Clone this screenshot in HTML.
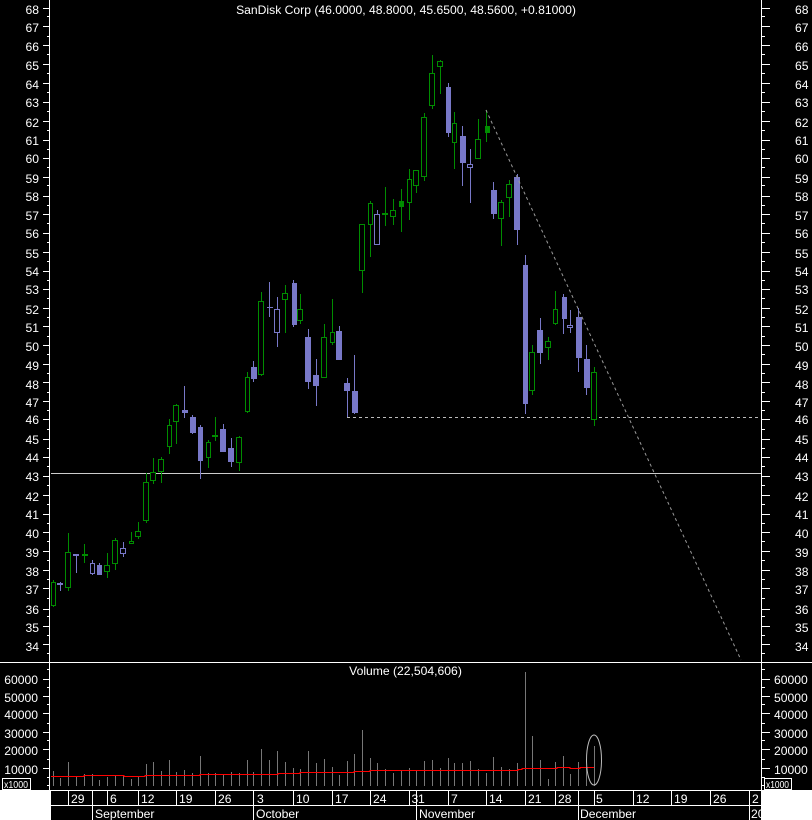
<!DOCTYPE html>
<html><head><meta charset="utf-8"><style>
html,body{margin:0;padding:0;background:#000;width:812px;height:820px;overflow:hidden}
svg{display:block}
text{font-family:"Liberation Sans",Arial,sans-serif;font-size:12.15px;fill:#fff}
text.s{font-size:10px}
</style></head><body>
<svg width="812" height="820" viewBox="0 0 812 820" xmlns="http://www.w3.org/2000/svg">
<rect width="812" height="820" fill="#000"/>
<g shape-rendering="crispEdges" fill="none">
<!-- reference lines -->
<path d="M51 473.5H761" stroke="#ccc"/>
<path d="M347 417.5H761" stroke="#bbb" stroke-dasharray="3 3"/>
<!-- green wicks -->
<path stroke="#008c00" d="M53.5 580V607M68.5 533V591M84.5 544V563M107.5 553V578M115.5 538V570M131.5 532V543M138.5 522V539M146.5 473V523M153.5 458V484M161.5 457V483M169.5 419V454M176.5 404V444M208.5 440V468M215.5 417V441M239.5 436V471M247.5 372V413M261.5 292V376M285.5 285V333M300.5 294V324M324.5 324V378M332.5 299V345M362.5 224V293M370.5 201V257M385.5 187V226M393.5 199V225M401.5 189V232M409.5 169V220M416.5 170V193M424.5 113V181M432.5 55V109M440.5 60V94M454.5 112V169M478.5 119V159M486.5 110V142M501.5 200V246M509.5 180V217M532.5 345V395M548.5 337V360M555.5 291V325M594.5 367V426"/>
<!-- blue wicks -->
<path stroke="#7878c8" d="M60.5 582V591M76.5 554V573M92.5 560V575M99.5 563V575M123.5 542V557M184.5 386V418M192.5 415V434M200.5 425V479M223.5 424V452M231.5 438V467M253.5 361V382M269.5 282V317M267 307.5H273M277.5 297V347M293.5 280V327M308.5 329V389M316.5 359V406M339.5 326V331M347.5 378V417M354.5 355V414M377.5 210V245M448.5 83V137M462.5 126V186M470.5 149V203M493.5 182V219M517.5 174V245M525.5 255V414M540.5 318V364M563.5 294V334M570.5 310V333M578.5 308V372M586.5 345V395"/>
<!-- green outlined bodies -->
<g fill="#000" stroke="#008c00">
<rect x="51.5" y="582.5" width="4" height="23"/><rect x="65.5" y="552.5" width="5" height="35"/><rect x="104.5" y="565.5" width="5" height="6"/><rect x="112.5" y="540.5" width="5" height="23"/><rect x="129.5" y="541.5" width="4" height="2"/><rect x="135.5" y="531.5" width="5" height="5"/><rect x="143.5" y="482.5" width="5" height="38"/><rect x="150.5" y="472.5" width="5" height="8"/><rect x="158.5" y="459.5" width="5" height="12"/><rect x="167.5" y="425.5" width="4" height="21"/><rect x="173.5" y="405.5" width="5" height="16"/><rect x="206.5" y="442.5" width="4" height="15"/><rect x="236.5" y="437.5" width="5" height="25"/><rect x="245.5" y="377.5" width="4" height="34"/><rect x="258.5" y="301.5" width="5" height="73"/><rect x="282.5" y="293.5" width="5" height="6"/><rect x="297.5" y="309.5" width="5" height="11"/><rect x="321.5" y="337.5" width="5" height="40"/><rect x="330.5" y="332.5" width="4" height="10"/><rect x="359.5" y="224.5" width="5" height="46"/><rect x="368.5" y="203.5" width="4" height="21"/><rect x="390.5" y="210.5" width="5" height="6"/><rect x="407.5" y="179.5" width="4" height="23"/><rect x="413.5" y="170.5" width="5" height="15"/><rect x="421.5" y="117.5" width="5" height="59"/><rect x="429.5" y="73.5" width="5" height="32"/><rect x="437.5" y="61.5" width="5" height="5"/><rect x="452.5" y="123.5" width="4" height="19"/><rect x="475.5" y="139.5" width="5" height="19"/><rect x="498.5" y="202.5" width="5" height="16"/><rect x="506.5" y="184.5" width="5" height="13"/><rect x="529.5" y="352.5" width="5" height="38"/><rect x="545.5" y="341.5" width="5" height="6"/><rect x="553.5" y="309.5" width="4" height="14"/><rect x="591.5" y="372.5" width="5" height="47"/>
</g>
<!-- green filled bodies -->
<path fill="#008c00" d="M82 554h6v2h-6zM212 435h6v2h-6zM382 213h6v2h-6zM399 201h5v6h-5zM485 126h5v7h-5z"/>
<!-- blue outlined bodies -->
<g fill="#000" stroke="#7878c8">
<rect x="90.5" y="563.5" width="4" height="10"/><rect x="120.5" y="548.5" width="5" height="5"/><rect x="274.5" y="309.5" width="5" height="23"/><rect x="374.5" y="214.5" width="5" height="30"/><rect x="467.5" y="164.5" width="5" height="3"/><rect x="567.5" y="325.5" width="5" height="2"/>
</g>
<!-- blue filled bodies -->
<path fill="#7878c8" d="M57 583h6v2h-6zM73 554h6v2h-6zM97 565h5v10h-5zM182 410h6v3h-6zM190 417h6v16h-6zM198 427h5v34h-5zM220 429h6v23h-6zM228 448h6v14h-6zM251 367h6v12h-6zM292 283h5v42h-5zM305 337h6v45h-6zM313 375h6v11h-6zM336 331h6v29h-6zM344 383h6v8h-6zM352 391h6v22h-6zM446 87h5v46h-5zM460 136h6v27h-6zM491 190h6v24h-6zM514 177h6v53h-6zM523 265h5v139h-5zM537 330h6v23h-6zM562 297h5v22h-5zM576 317h6v41h-6zM584 359h6v29h-6z"/>
<!-- volume bars -->
<path stroke="#777" d="M53.5 771V786M60.5 778V786M68.5 762V786M76.5 777V786M84.5 774V786M92.5 774V786M99.5 780V786M107.5 777V786M115.5 775V786M123.5 776V786M131.5 779V786M138.5 777V786M146.5 764V786M153.5 762V786M161.5 771V786M169.5 760V786M176.5 772V786M184.5 770V786M192.5 773V786M200.5 756V786M208.5 773V786M215.5 773V786M223.5 774V786M231.5 772V786M239.5 773V786M247.5 760V786M253.5 772V786M261.5 749V786M269.5 760V786M277.5 751V786M285.5 762V786M293.5 768V786M300.5 769V786M308.5 751V786M316.5 763V786M324.5 759V786M332.5 767V786M339.5 775V786M347.5 761V786M354.5 754V786M362.5 730V786M370.5 758V786M377.5 763V786M385.5 769V786M393.5 773V786M401.5 771V786M409.5 768V786M416.5 771V786M424.5 761V786M432.5 760V786M440.5 768V786M448.5 758V786M454.5 763V786M462.5 763V786M470.5 761V786M478.5 769V786M486.5 773V786M493.5 757V786M501.5 767V786M509.5 769V786M517.5 763V786M525.5 672V786M532.5 736V786M540.5 760V786M548.5 779V786M555.5 762V786M563.5 756V786M570.5 774V786M578.5 762V786M586.5 767V786M594.5 746V786"/>
<path stroke="#f00" d="M51 776.5H84V775.5H124V776.5H145V775.5H200V774.5H278V773.5H300V772.5H354V771.5H370V770.5H518V769.5H522V768.5H557V767.5H570V768.5H580V767.5H594"/>
<!-- axes -->
<path stroke="#fff" d="M49.5 0V790M761.5 0V790M0 662.5H812M51 790.5H761M51 805.5H761"/>
<!-- ticks left price -->
<path stroke="#fff" d="M43 8.5h6M47 16.5h2M43 26.5h6M47 36.5h2M43 45.5h6M47 54.5h2M43 64.5h6M47 73.5h2M43 83.5h6M47 92.5h2M43 102.5h6M47 111.5h2M43 121.5h6M47 130.5h2M43 140.5h6M47 149.5h2M43 158.5h6M47 167.5h2M43 177.5h6M47 185.5h2M43 196.5h6M47 205.5h2M43 214.5h6M47 223.5h2M43 233.5h6M47 242.5h2M43 252.5h6M47 261.5h2M43 271.5h6M47 280.5h2M43 289.5h6M47 298.5h2M43 308.5h6M47 317.5h2M43 326.5h6M47 336.5h2M43 345.5h6M47 354.5h2M43 364.5h6M47 373.5h2M43 382.5h6M47 392.5h2M43 401.5h6M47 410.5h2M43 419.5h6M47 429.5h2M43 439.5h6M47 448.5h2M43 457.5h6M47 466.5h2M43 476.5h6M47 485.5h2M43 495.5h6M47 504.5h2M43 514.5h6M47 523.5h2M43 532.5h6M47 541.5h2M43 551.5h6M47 560.5h2M43 570.5h6M47 579.5h2M43 588.5h6M47 598.5h2M43 609.5h6M47 616.5h2M43 626.5h6M47 635.5h2M43 644.5h6M47 653.5h2"/>
<!-- ticks right price -->
<path stroke="#fff" d="M762 8.5h8M762 16.5h3M762 26.5h8M762 36.5h3M762 45.5h8M762 54.5h3M762 64.5h8M762 73.5h3M762 83.5h8M762 92.5h3M762 102.5h8M762 111.5h3M762 121.5h8M762 130.5h3M762 140.5h8M762 149.5h3M762 158.5h8M762 167.5h3M762 177.5h8M762 185.5h3M762 196.5h8M762 205.5h3M762 214.5h8M762 223.5h3M762 233.5h8M762 242.5h3M762 252.5h8M762 261.5h3M762 271.5h8M762 280.5h3M762 289.5h8M762 298.5h3M762 308.5h8M762 317.5h3M762 326.5h8M762 336.5h3M762 345.5h8M762 354.5h3M762 364.5h8M762 373.5h3M762 382.5h8M762 392.5h3M762 401.5h8M762 410.5h3M762 419.5h8M762 429.5h3M762 439.5h8M762 448.5h3M762 457.5h8M762 466.5h3M762 476.5h8M762 485.5h3M762 495.5h8M762 504.5h3M762 514.5h8M762 523.5h3M762 532.5h8M762 541.5h3M762 551.5h8M762 560.5h3M762 570.5h8M762 579.5h3M762 588.5h8M762 598.5h3M762 609.5h8M762 616.5h3M762 626.5h8M762 635.5h3M762 644.5h8M762 653.5h3"/>
<!-- ticks volume -->
<path stroke="#fff" d="M47 669.5h2M43 679.5h6M47 687.5h2M43 696.5h6M47 704.5h2M43 713.5h6M47 723.5h2M43 732.5h6M47 740.5h2M43 749.5h6M47 759.5h2M43 768.5h6M47 777.5h2M47 785.5h2M762 669.5h3M762 679.5h8M762 687.5h3M762 696.5h8M762 704.5h3M762 713.5h8M762 723.5h3M762 732.5h8M762 740.5h3M762 749.5h8M762 759.5h3M762 768.5h8M762 777.5h3M762 785.5h3"/>
<!-- date separators -->
<path stroke="#fff" d="M68.5 790V805M92.5 790V820M107.5 790V805M138.5 790V805M176.5 790V805M215.5 790V805M253.5 790V820M293.5 790V805M332.5 790V805M370.5 790V805M409.5 790V805M416.5 790V820M448.5 790V805M486.5 790V805M525.5 790V805M555.5 790V805M578.5 790V820M594.5 790V805M633.5 790V805M671.5 790V805M710.5 790V805M749.5 790V820"/>
<!-- white corners -->
<rect x="0" y="790" width="51" height="30" fill="#fff"/>
<rect x="761" y="790" width="51" height="30" fill="#fff"/>
<rect x="2.5" y="778.5" width="28" height="11" fill="#000" stroke="#fff"/>
<rect x="764.5" y="778.5" width="27" height="11" fill="#000" stroke="#fff"/>
</g>
<!-- trend line and ellipse -->
<path d="M486 110L741 660" stroke="#999" stroke-width="1" stroke-dasharray="3 3" fill="none"/>
<ellipse cx="594" cy="760" rx="7.5" ry="25" fill="none" stroke="#bbb" stroke-width="1"/>
<!-- title -->
<text x="406" y="14" text-anchor="middle">SanDisk Corp (46.0000, 48.8000, 45.6500, 48.5600, +0.81000)</text>
<text x="405.5" y="675" text-anchor="middle">Volume (22,504,606)</text>
<!-- left labels -->
<g text-anchor="end">
<text x="39" y="14">68</text><text x="39" y="32">67</text><text x="39" y="51">66</text><text x="39" y="70">65</text><text x="39" y="89">64</text><text x="39" y="107">63</text><text x="39" y="127">62</text><text x="39" y="145">61</text><text x="39" y="163">60</text><text x="39" y="183">59</text><text x="39" y="201">58</text><text x="39" y="220">57</text><text x="39" y="238">56</text><text x="39" y="258">55</text><text x="39" y="276">54</text><text x="39" y="294">53</text><text x="39" y="314">52</text><text x="39" y="332">51</text><text x="39" y="351">50</text><text x="39" y="370">49</text><text x="39" y="389">48</text><text x="39" y="407">47</text><text x="39" y="424">46</text><text x="39" y="444">45</text><text x="39" y="462">44</text><text x="39" y="481">43</text><text x="39" y="501">42</text><text x="39" y="519">41</text><text x="39" y="538">40</text><text x="39" y="557">39</text><text x="39" y="576">38</text><text x="39" y="594">37</text><text x="39" y="614">36</text><text x="39" y="632">35</text><text x="39" y="651">34</text>
<text x="38" y="684">60000</text><text x="38" y="702">50000</text><text x="38" y="719">40000</text><text x="38" y="738">30000</text><text x="38" y="755">20000</text><text x="38" y="774">10000</text>
</g>
<!-- right labels -->
<g text-anchor="start">
<text x="795" y="14">68</text><text x="795" y="32">67</text><text x="795" y="51">66</text><text x="795" y="70">65</text><text x="795" y="89">64</text><text x="795" y="107">63</text><text x="795" y="127">62</text><text x="795" y="145">61</text><text x="795" y="163">60</text><text x="795" y="183">59</text><text x="795" y="201">58</text><text x="795" y="220">57</text><text x="795" y="238">56</text><text x="795" y="258">55</text><text x="795" y="276">54</text><text x="795" y="294">53</text><text x="795" y="314">52</text><text x="795" y="332">51</text><text x="795" y="351">50</text><text x="795" y="370">49</text><text x="795" y="389">48</text><text x="795" y="407">47</text><text x="795" y="424">46</text><text x="795" y="444">45</text><text x="795" y="462">44</text><text x="795" y="481">43</text><text x="795" y="501">42</text><text x="795" y="519">41</text><text x="795" y="538">40</text><text x="795" y="557">39</text><text x="795" y="576">38</text><text x="795" y="594">37</text><text x="795" y="614">36</text><text x="795" y="632">35</text><text x="795" y="651">34</text>
<text x="774" y="684">60000</text><text x="774" y="702">50000</text><text x="774" y="719">40000</text><text x="774" y="738">30000</text><text x="774" y="755">20000</text><text x="774" y="774">10000</text>
</g>
<text class="s" x="4" y="788" textLength="24" lengthAdjust="spacingAndGlyphs">x1000</text>
<text class="s" x="766" y="788" textLength="23" lengthAdjust="spacingAndGlyphs">x1000</text>
<!-- dates -->
<text x="71" y="803">29</text><text x="110" y="803">6</text><text x="141" y="803">12</text><text x="179" y="803">19</text><text x="218" y="803">26</text><text x="257" y="803">3</text><text x="296" y="803">10</text><text x="335" y="803">17</text><text x="373" y="803">24</text><text x="411.5" y="803">3</text><text x="418" y="803">1</text><text x="451" y="803">7</text><text x="489" y="803">14</text><text x="528" y="803">21</text><text x="558" y="803">28</text><text x="596" y="803">5</text><text x="636" y="803">12</text><text x="674" y="803">19</text><text x="713" y="803">26</text><text x="752" y="803">2</text>
<text x="95" y="818">September</text><text x="256" y="818">October</text><text x="419" y="818">November</text><text x="580" y="818">December</text>
<svg x="750" y="806" width="11" height="14"><text x="1" y="12">20</text></svg>
</svg>
</body></html>
